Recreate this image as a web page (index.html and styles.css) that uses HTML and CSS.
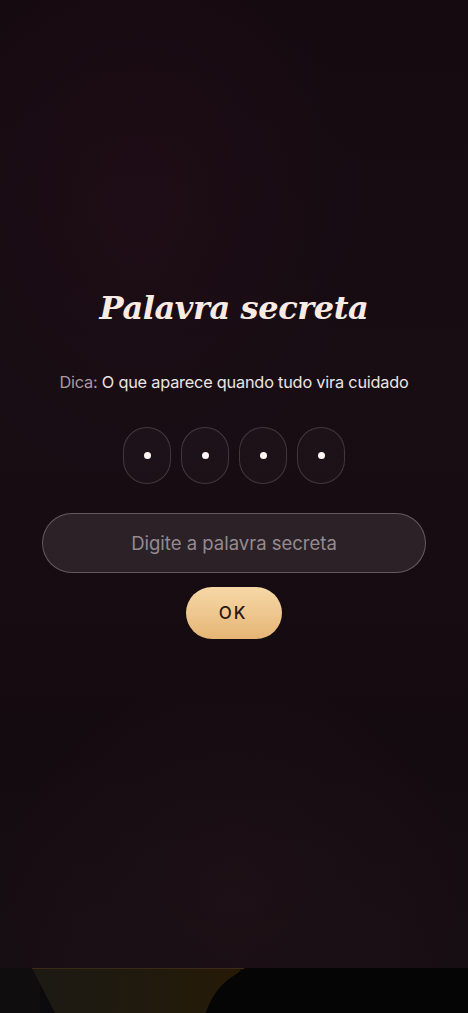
FILE: index.html
```html
<!DOCTYPE html>
<html lang="pt">
<head>
<meta charset="utf-8">
<title>Palavra secreta</title>
<link rel="stylesheet" href="styles.css">
</head>
<body>
<main class="screen">
  <section class="content">
    <h1 class="title">Palavra secreta</h1>
    <p class="hint"><span class="hint-label">Dica:</span> O que aparece quando tudo vira cuidado</p>
    <div class="slots">
      <div class="slot"><span class="dot"></span></div>
      <div class="slot"><span class="dot"></span></div>
      <div class="slot"><span class="dot"></span></div>
      <div class="slot"><span class="dot"></span></div>
    </div>
    <input class="field" type="text" placeholder="Digite a palavra secreta">
    <button class="ok" type="button">OK</button>
  </section>
  <div class="strip">
    <svg class="strip-art" viewBox="0 0 468 45" preserveAspectRatio="none" width="468" height="45">
      <defs>
        <linearGradient id="gold" x1="0" y1="0" x2="1" y2="0">
          <stop offset="0" stop-color="#1d1a14"/>
          <stop offset="0.5" stop-color="#201a0e"/>
          <stop offset="1" stop-color="#261a06"/>
        </linearGradient>
      </defs>
      <rect x="0" y="0" width="468" height="45" fill="#0b0a0c"/>
      <rect x="0" y="0" width="40" height="45" fill="#0f0d0e"/>
      <polygon points="32,0 242,0 205,45 55,45" fill="url(#gold)"/>
      <line x1="32" y1="0.5" x2="244" y2="0.5" stroke="#3a2a18" stroke-width="1"/>
      <path d="M248,0 C225,10 212,25 206,45 L468,45 L468,0 Z" fill="#050506"/>
    </svg>
  </div>
</main>
</body>
</html>
```

FILE: styles.css
```css
* { box-sizing: border-box; }
html, body {
  margin: 0;
  padding: 0;
  height: 100%;
}
body {
  background: #150c11;
  font-family: Inter, "Open Sans", "Liberation Sans", sans-serif;
  color: #f3ebe6;
}
.screen {
  width: 468px;
  height: 1013px;
  display: flex;
  flex-direction: column;
  background:
    radial-gradient(ellipse 70% 40% at 30% 20%, rgba(40, 14, 26, 0.45), rgba(0,0,0,0) 70%),
    radial-gradient(ellipse 70% 30% at 50% 88%, rgba(34, 18, 24, 0.55), rgba(0,0,0,0) 70%),
    linear-gradient(180deg, #150a10 0%, #170d13 40%, #140b10 75%, #180f14 100%);
}
.content {
  flex: 1;
  display: flex;
  flex-direction: column;
  align-items: center;
  padding-top: 285px;
}
.title {
  margin: 0;
  font-family: "DejaVu Serif", "Liberation Serif", serif;
  font-style: italic;
  font-weight: 700;
  font-size: 32px;
  line-height: 46px;
  letter-spacing: -0.4px;
  color: #f7ebe4;
}
.hint {
  margin: 40px 0 0;
  font-size: 16.3px;
  line-height: 22px;
  color: #ece4e2;
  letter-spacing: -0.2px;
}
.hint-label {
  color: #a79ba0;
}
.slots {
  margin-top: 34px;
  display: flex;
  gap: 10px;
}
.slot {
  width: 48px;
  height: 57px;
  border-radius: 24px;
  border: 1px solid rgba(255, 255, 255, 0.16);
  background: rgba(255, 255, 255, 0.025);
  display: flex;
  align-items: center;
  justify-content: center;
}
.dot {
  width: 7px;
  height: 7px;
  border-radius: 50%;
  background: #fbf6f3;
}
.field {
  margin-top: 29px;
  width: 384px;
  height: 60px;
  border-radius: 30px;
  border: 1px solid rgba(255, 255, 255, 0.26);
  background: rgba(255, 255, 255, 0.09);
  color: #efe6e2;
  font-family: inherit;
  font-size: 18.5px;
  text-align: center;
  outline: none;
}
.field::placeholder {
  color: #968a8f;
}
.ok {
  margin-top: 14px;
  width: 96px;
  height: 52px;
  border-radius: 26px;
  border: none;
  background: linear-gradient(180deg, #f6d8a5 0%, #eec58d 55%, #e5b574 100%);
  color: #2a1614;
  font-family: inherit;
  font-size: 17px;
  font-weight: 500;
  letter-spacing: 2px;
  padding-left: 4px;
}
.strip {
  height: 45px;
  flex: none;
}
.strip-art {
  display: block;
}
```
